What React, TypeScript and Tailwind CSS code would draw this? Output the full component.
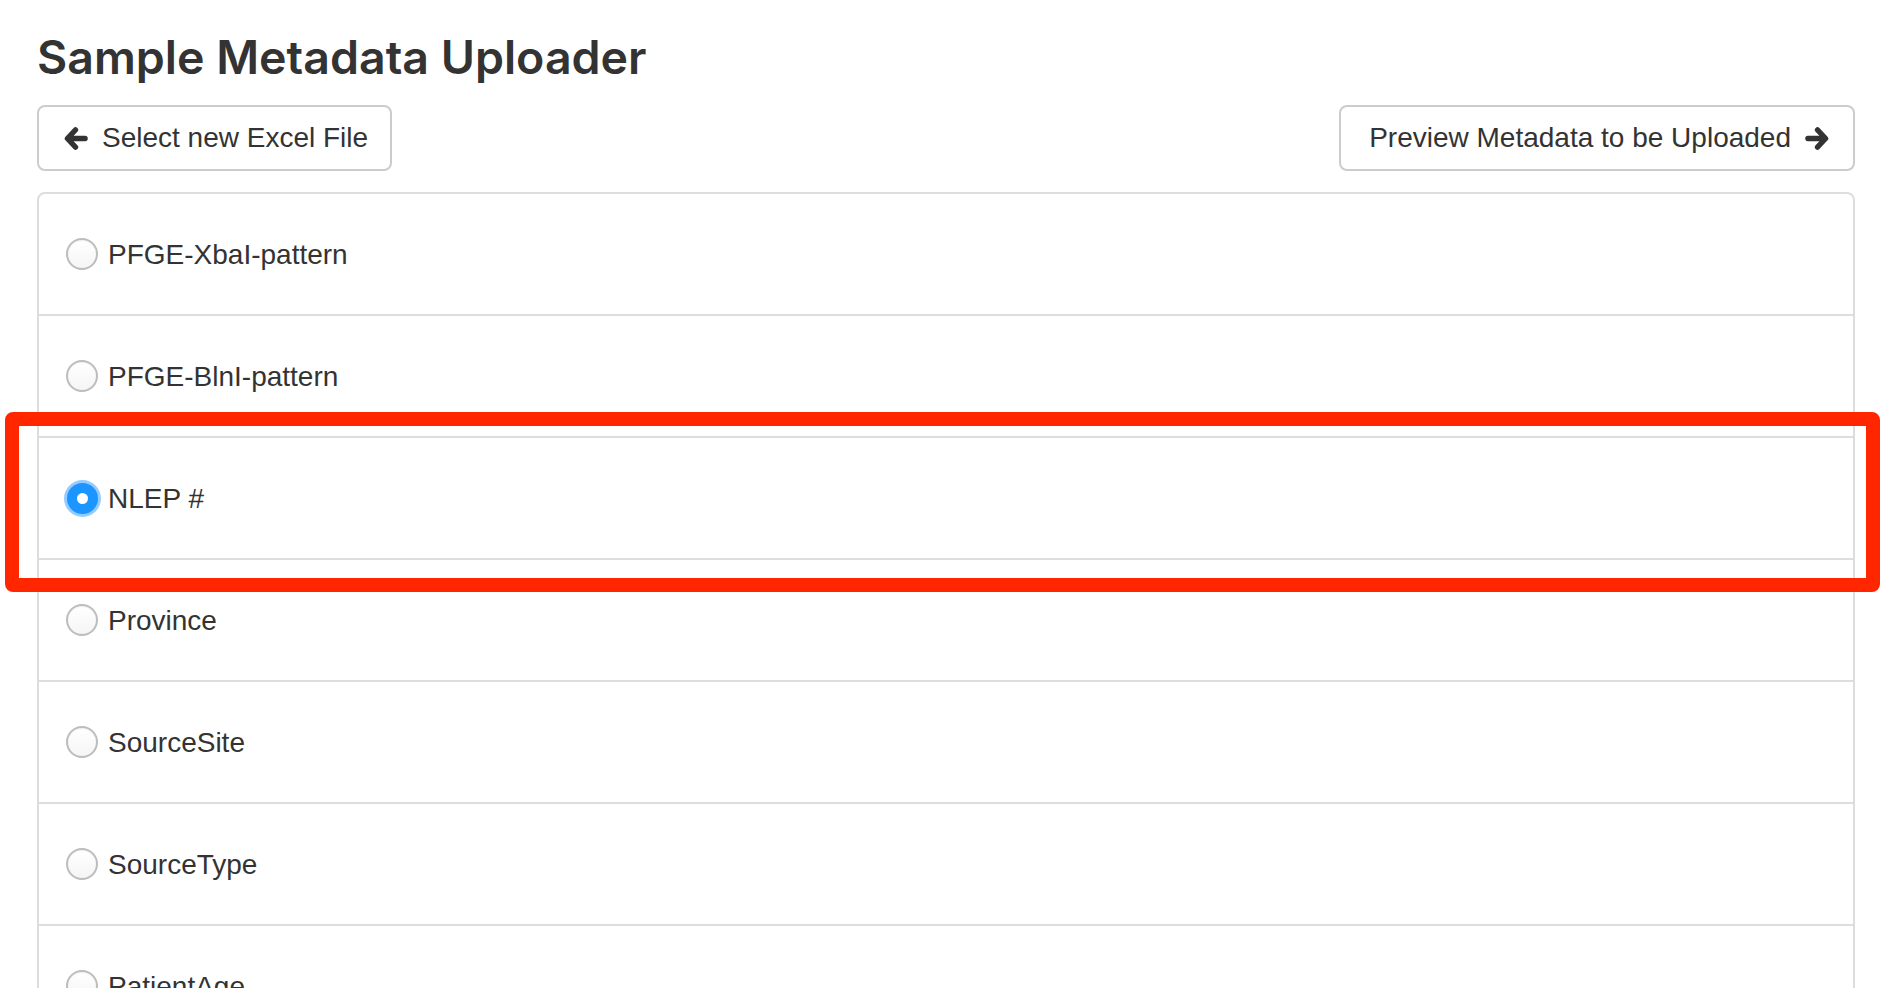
import React, { FC } from "react";

const fields = [
  "PFGE-XbaI-pattern",
  "PFGE-BlnI-pattern",
  "NLEP #",
  "Province",
  "SourceSite",
  "SourceType",
  "PatientAge",
  "PatientSex",
];

const Arrow: FC<{ dir: "left" | "right" }> = ({ dir }) => (
  <svg
    viewBox="0 0 25 25"
    className={"w-[24px] h-[25px] flex-shrink-0 " + (dir === "right" ? "rotate-180" : "")}
    fill="none"
    stroke="#333"
    strokeWidth={5.5}
    strokeLinecap="round"
    strokeLinejoin="round"
  >
    <path d="M12 3.5 L3.5 12.5 L12 21.5 M4 12.5 H22" />
  </svg>
);

const Radio: FC<{ checked?: boolean }> = ({ checked }) => {
  if (checked) {
    return (
      <div className="w-[32px] h-[32px] flex flex-shrink-0 items-center justify-center">
        <div className="w-[31px] h-[31px] rounded-full bg-[#1b95ff] ring-[3px] ring-[#95ccff] flex items-center justify-center">
          <div className="w-[11px] h-[11px] rounded-full bg-white"></div>
        </div>
      </div>
    );
  }
  return (
    <div className="w-[32px] h-[32px] flex-shrink-0 rounded-full border-2 border-[#bdbdbd] bg-gradient-to-b from-white to-[#f5f5f5] shadow-[inset_0_1px_1px_rgba(0,0,0,0.06)]"></div>
  );
};

const App: FC = () => {
  return (
    <div
      className="relative h-[988px] overflow-hidden bg-white pl-[37px] pr-[31px] text-[#333]"
      style={{ fontFamily: '"Liberation Sans", Arial, sans-serif' }}
    >
      <h1
        className="pt-[30px] text-[46.5px] leading-[55px] font-semibold"
        style={{ fontFamily: 'Inter, "Liberation Sans", sans-serif' }}
      >
        Sample Metadata Uploader
      </h1>

      <div className="mt-[20px] flex flex-row justify-between">
        <button className="h-[66px] flex items-center gap-[14px] pl-[25px] pr-[22px] border-2 border-[#ccc] rounded-[8px] bg-white text-[28px] text-[#333]">
          <Arrow dir="left" />
          <span>Select new Excel File</span>
        </button>
        <button className="h-[66px] flex items-center gap-[14px] pl-[28px] pr-[24px] border-2 border-[#ccc] rounded-[8px] bg-white text-[28px] text-[#333]">
          <span>Preview Metadata to be Uploaded</span>
          <Arrow dir="right" />
        </button>
      </div>

      <div className="mt-[21px] border-2 border-[#ddd] rounded-[8px] divide-y-2 divide-[#ddd]">
        {fields.map((f, i) => (
          <label
            key={f}
            className="box-content h-[120px] flex flex-row items-center pl-[27px] gap-[10px] text-[28px] leading-[40px]"
          >
            <Radio checked={i === 2} />
            <span className="pt-[2px]">{f}</span>
          </label>
        ))}
      </div>

      {/* annotation box */}
      <div className="absolute left-[5px] top-[412px] w-[1875px] h-[180px] border-[14px] border-[#ff2600] rounded-[8px]"></div>
    </div>
  );
};

export default App;
